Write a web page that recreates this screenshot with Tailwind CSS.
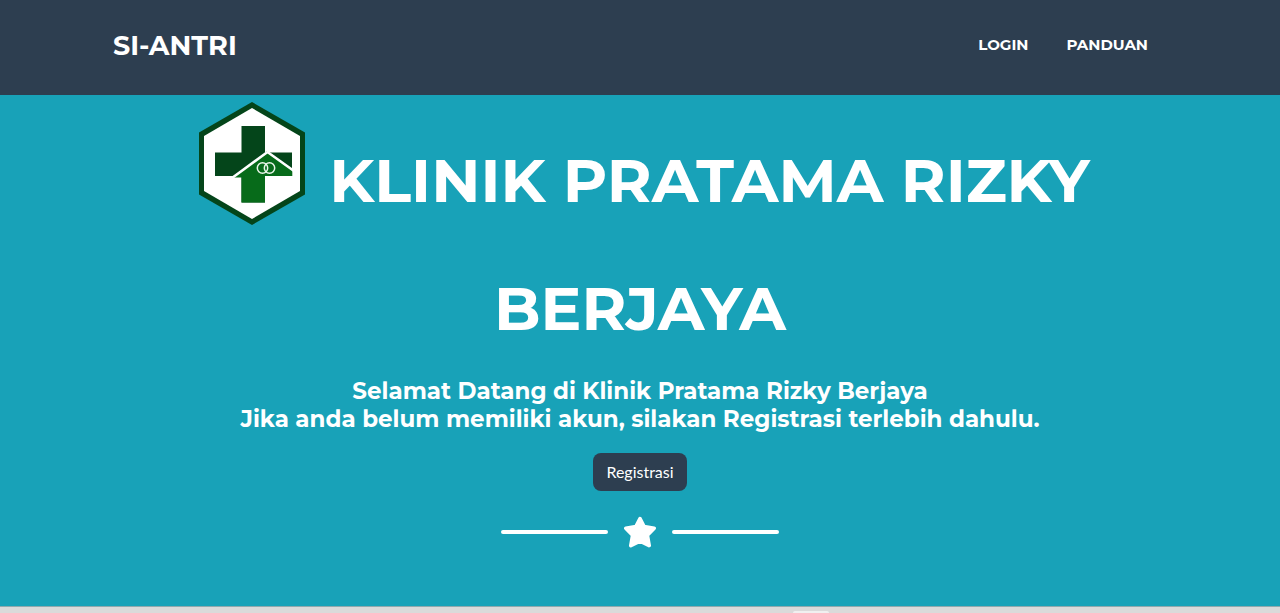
<!DOCTYPE html>
<html lang="id">
<head>
<meta charset="utf-8">
<meta name="viewport" content="width=device-width, initial-scale=1">
<title>SI-ANTRI</title>
<script src="https://cdn.jsdelivr.net/npm/@tailwindcss/browser@4"></script>
</head>
<body class="min-h-screen overflow-x-hidden bg-[#dadada] font-['Montserrat','Inter',sans-serif] text-white">
<header class="bg-[#2d3e50]">
  <nav class="mx-auto flex h-[95px] max-w-[1108px] items-center justify-between pr-[46px] pb-1 pl-[27px]">
    <a href="#" class="pt-0.5 text-[27px] font-bold">SI-ANTRI</a>
    <ul class="flex gap-[38px] text-[15px] font-bold">
      <li><a href="#login">LOGIN</a></li>
      <li><a href="#panduan">PANDUAN</a></li>
    </ul>
  </nav>
</header>
<main class="border-b border-[#8fa9ae] bg-[#18a2b8] px-6 pt-[7px] pb-[58px] text-center">
  <h1 class="mx-auto max-w-[1054px] text-[61px] leading-[128px] font-bold">
    <svg class="mr-[23px] ml-2 inline-block h-[123px] w-[108px] align-[-23px]" viewBox="0 0 108 123" aria-hidden="true">
      <path d="M54 0 107 30.500V92.500L54 123 1 92.500V30.500Z" fill="#04451a"/>
      <path d="M54 6 102 34V89L54 117 6 89V34Z" fill="#fff"/>
      <path d="M43.500 24H67V50.500H94V74H67V100.500H43.500V74H17V50.500H43.500Z" fill="#04451a"/>
      <path d="M35 75.500 69 49 95 68V74H67V100.500H43.500V75.500Z" fill="#076b1a"/>
      <path d="M34 76 69.500 50 96 69" fill="none" stroke="#fff" stroke-width="2.600"/>
      <path d="M94.300 48H98V78H94.300Z" fill="#fff"/>
      <g fill="none" stroke="#e9f5e9" stroke-width="1.500"><circle cx="64.500" cy="66" r="5.200"/><circle cx="71.500" cy="66" r="5.200"/></g>
    </svg>KLINIK PRATAMA RIZKY BERJAYA
  </h1>
  <p class="mt-[5px] text-[23px] leading-[28px] font-bold">Selamat Datang di Klinik Pratama Rizky Berjaya<br>Jika anda belum memiliki akun, silakan Registrasi terlebih dahulu.</p>
  <button type="button" class="mt-5 h-[38px] rounded-lg bg-[#2d3e50] px-[13px] font-['Lato',sans-serif] text-base">Registrasi</button>
  <div class="mt-[25px] flex items-center justify-center gap-4">
    <span class="h-1 w-[107px] rounded-full bg-white"></span>
    <svg class="h-8 w-8" viewBox="0 0 32 32" fill="#fff" stroke="#fff" stroke-width="3.600" stroke-linejoin="round" aria-hidden="true"><path d="M16 2.600 20.100 10.600 30.200 12.200 23.400 19.200 25.200 29.600 16 25.200 6.800 29.600 8.600 19.200 1.800 12.200 11.900 10.600Z"/></svg>
    <span class="h-1 w-[107px] rounded-full bg-white"></span>
  </div>
</main>
<footer class="flex justify-center pt-1 pl-[341px]">
  <span class="h-0.5 w-9 rounded-t-sm bg-[#f0f0f0]"></span>
</footer>
</body>
</html>
